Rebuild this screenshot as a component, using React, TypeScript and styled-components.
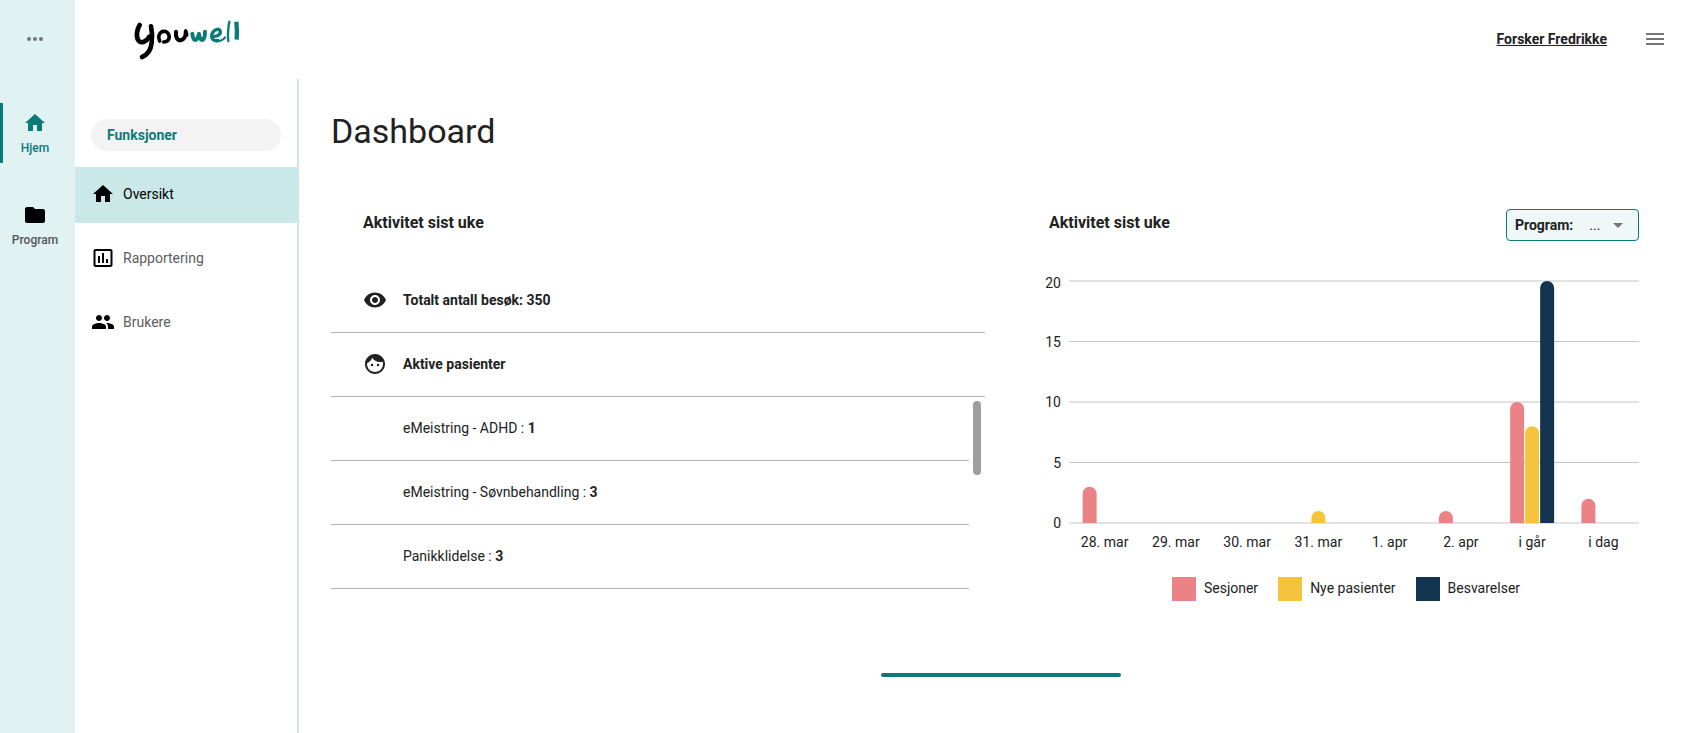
import React from "react";
import styled, { createGlobalStyle } from "styled-components";
import {
  MdArrowDropDown,
  MdFace,
  MdFolder,
  MdHome,
  MdInsertChartOutlined,
  MdMenu,
  MdMoreHoriz,
  MdPeople,
  MdVisibility,
} from "react-icons/md";

const teal = "#0b7b79";
const ink = "#212121";
const muted = "#5c5c5c";
const rule = "#b3b3b3";

const GlobalStyle = createGlobalStyle`
  *, *::before, *::after { box-sizing: border-box; }
  body {
    margin: 0;
    background: #fff;
    color: ${ink};
    font-family: Roboto, "Liberation Sans", sans-serif;
    font-size: 14px;
    line-height: 20px;
  }
  h1, h2, ul { margin: 0; padding: 0; }
  ul { list-style: none; }
  button { padding: 0; border: 0; background: none; cursor: pointer; font: inherit; }
  svg { display: block; flex-shrink: 0; }
`;

const Page = styled.div`
  display: flex;
  min-height: 100vh;
`;

const Rail = styled.nav`
  display: flex;
  flex-direction: column;
  gap: 32px;
  flex: 0 0 75px;
  background: #e0f2f1;
`;

const RailMore = styled.button`
  display: flex;
  align-items: center;
  justify-content: center;
  height: 71px;
  padding: 6px 5px 0 0;
  color: #757575;
`;

const RailLink = styled.a<{ $active?: boolean }>`
  display: flex;
  flex-direction: column;
  align-items: center;
  gap: 4px;
  height: 60px;
  padding: 8px 8px 0 0;
  border-left: 3px solid ${(p) => (p.$active ? teal : "transparent")};
  color: ${(p) => (p.$active ? teal : "#555")};
  font-size: 12px;
  line-height: 18px;
  font-weight: 500;
  text-decoration: none;

  svg {
    color: ${(p) => (p.$active ? teal : "#000")};
  }
`;

const Shell = styled.div`
  display: flex;
  flex-direction: column;
  flex: 1;
  min-width: 0;
`;

const TopBar = styled.header`
  display: flex;
  align-items: center;
  justify-content: space-between;
  height: 79px;
  padding: 0 24px 0 45px;
`;

const Account = styled.div`
  display: flex;
  align-items: center;
  gap: 36px;
  padding-bottom: 2px;
`;

const AccountLink = styled.a`
  color: ${ink};
  font-weight: 700;
  text-decoration: underline;
`;

const MenuButton = styled.button`
  color: #757575;
`;

const Body = styled.div`
  display: flex;
  flex: 1;
`;

const SideNav = styled.nav`
  flex: 0 0 224px;
  padding-top: 40px;
  border-right: 2px solid #c9e8e7;
`;

const SideTitle = styled.h2`
  margin: 0 16px 16px;
  padding: 6px 16px;
  border-radius: 16px;
  background: #f3f3f3;
  color: ${teal};
  font-size: 14px;
  line-height: 20px;
  font-weight: 700;
`;

const SideList = styled.ul`
  display: flex;
  flex-direction: column;
  gap: 8px;
`;

const SideLink = styled.a<{ $active?: boolean }>`
  display: flex;
  align-items: center;
  gap: 8px;
  height: 56px;
  padding: 0 16px 2px;
  background: ${(p) => (p.$active ? "#c9e8e7" : "transparent")};
  color: ${(p) => (p.$active ? "#000" : muted)};
  text-decoration: none;

  svg {
    color: #000;
  }
`;

const Main = styled.main`
  display: flex;
  flex-direction: column;
  flex: 1;
  min-width: 0;
  padding: 32px 20px 32px 32px;
`;

const Title = styled.h1`
  font-size: 34px;
  line-height: 40px;
  font-weight: 400;
`;

const Panels = styled.div`
  display: grid;
  grid-template-columns: 1fr 1fr;
  margin-top: 58px;
  padding-right: 32px;
`;

const Panel = styled.section`
  min-width: 0;
`;

const PanelHead = styled.div<{ $inset: number }>`
  display: flex;
  justify-content: space-between;
  height: 60px;
  padding-left: ${(p) => p.$inset}px;
`;

const PanelTitle = styled.h2`
  padding-top: 2px;
  font-size: 16px;
  line-height: 24px;
  font-weight: 700;
`;

const StatRow = styled.div`
  display: flex;
  align-items: center;
  gap: 16px;
  height: 64px;
  padding: 0 0 2px 32px;
  border-bottom: 1px solid ${rule};
  font-weight: 700;
`;

const Scroller = styled.div`
  display: flex;
`;

const ProgramList = styled.ul`
  flex: 1;
`;

const ProgramRow = styled.li`
  display: flex;
  align-items: center;
  height: 64px;
  padding: 0 0 2px 72px;
  border-bottom: 1px solid ${rule};
  white-space: pre;
`;

const Thumb = styled.div`
  width: 8px;
  height: 74px;
  margin: 4px;
  border-radius: 4px;
  background: #9e9e9e;
`;

const Picker = styled.div`
  display: flex;
  align-items: center;
  width: 133px;
  height: 32px;
  padding: 0 8px;
  border: 1px solid ${teal};
  border-radius: 4px;
  background: #eff7f7;
`;

const PickerLabel = styled.label`
  font-weight: 700;
`;

const PickerField = styled.div`
  display: grid;
  flex: 1;
  align-items: center;

  > * {
    grid-area: 1 / 1;
  }
  > svg {
    justify-self: end;
    color: #757575;
    pointer-events: none;
  }
`;

const PickerSelect = styled.select`
  appearance: none;
  width: 100%;
  padding: 0 24px 0 16px;
  border: 0;
  background: none;
  color: ${ink};
  font: inherit;
`;

const ChartArea = styled.div`
  padding-left: 52px;
`;

const ChartSvg = styled.svg`
  width: 100%;
  height: 292px;
  overflow: visible;

  text {
    fill: ${ink};
    font-size: 14px;
  }
`;

const Legend = styled.ul`
  display: flex;
  justify-content: center;
  gap: 20px;
  margin-top: 16px;
  padding-left: 16px;
`;

const LegendItem = styled.li<{ $color: string }>`
  display: flex;
  align-items: flex-start;
  gap: 8px;
  line-height: 22px;

  &::before {
    content: "";
    width: 24px;
    height: 24px;
    background: ${(p) => p.$color};
  }
`;

const BottomBar = styled.div`
  align-self: center;
  width: 240px;
  height: 4px;
  margin-top: 72px;
  border-radius: 2px;
  background: ${teal};
`;

const Logo = () => (
  <svg width="130" height="60" viewBox="0 0 390 180" fill="none" strokeLinecap="round" strokeLinejoin="round" role="img" aria-label="youwell">
    <g stroke="#000">
      <path d="M59 45C51 58 47 78 55 91C64 103 80 94 88 80" strokeWidth="14" />
      <path d="M93 49C96 62 97 80 95 98C93 116 84 134 66 141" strokeWidth="14" />
      <path d="M127 64C116 70 114 82 119 93M131 96C147 96 150 82 146 73C142 65 134 62 129 65" strokeWidth="11" />
      <path d="M168 65C166 80 172 92 182 91C192 89 198 79 197 65" strokeWidth="12" />
      <path d="M197 62C199 66 201 71 201 76" strokeWidth="9" />
    </g>
    <g stroke={teal}>
      <path d="M217 71C218 82 221 90 226 90C231 89 235 79 237 72C238 82 242 90 247 90C252 88 255 77 255 65" strokeWidth="12" />
      <path d="M280 79C292 80 302 74 301 64C299 52 281 59 276 72C272 87 282 94 294 92" strokeWidth="10" />
      <path d="M290 94C303 93 311 88 315 82" strokeWidth="6" />
      <path d="M328 35C324 56 323 78 325 93" strokeWidth="7" />
      <path d="M349 35C351 54 351 76 350 89" strokeWidth="13" strokeLinecap="butt" />
    </g>
  </svg>
);

const series = [
  { name: "Sesjoner", color: "#ea8286" },
  { name: "Nye pasienter", color: "#f5c43c" },
  { name: "Besvarelser", color: "#12344f" },
];

const days = [
  { label: "28. mar", values: [3, 0, 0] },
  { label: "29. mar", values: [0, 0, 0] },
  { label: "30. mar", values: [0, 0, 0] },
  { label: "31. mar", values: [0, 1, 0] },
  { label: "1. apr", values: [0, 0, 0] },
  { label: "2. apr", values: [1, 0, 0] },
  { label: "i går", values: [10, 8, 20] },
  { label: "i dag", values: [2, 0, 0] },
];

const programs = [
  { name: "eMeistring - ADHD", count: 1 },
  { name: "eMeistring - Søvnbehandling", count: 3 },
  { name: "Panikklidelse", count: 3 },
];

const plotTop = 12;
const plotHeight = 242;
const baseline = plotTop + plotHeight;
const yOf = (value: number) => baseline - (value / 20) * plotHeight;

const barPath = (x: number, value: number) => {
  const top = yOf(value);
  return `M${x} ${baseline}V${top + 7}a7 7 0 0 1 14 0V${baseline}Z`;
};

const Chart = () => (
  <ChartSvg role="img" aria-label="Aktivitet sist uke">
    {[20, 15, 10, 5, 0].map((tick) => (
      <text key={tick} x="24" y={yOf(tick) + (tick === 20 ? 7 : 5)} textAnchor="end">
        {tick}
      </text>
    ))}
    <svg x="32" y="0" style={{ width: "calc(100% - 32px)", overflow: "visible" }}>
      {[20, 15, 10, 5, 0].map((tick) => (
        <line key={tick} x1="0" x2="100%" y1={yOf(tick)} y2={yOf(tick)} stroke="#c4c4c4" />
      ))}
      {days.map((day, i) => (
        <svg key={day.label} x={`${((i + 0.5) / days.length) * 100}%`} overflow="visible">
          {day.values.map((value, s) =>
            value > 0 ? <path key={s} d={barPath(-22 + s * 15, value)} fill={series[s].color} /> : null
          )}
          <text y={baseline + 24} textAnchor="middle">
            {day.label}
          </text>
        </svg>
      ))}
    </svg>
  </ChartSvg>
);

export default function App() {
  return (
    <Page>
      <GlobalStyle />
      <Rail aria-label="Hovedmeny">
        <RailMore aria-label="Mer">
          <MdMoreHoriz size={24} />
        </RailMore>
        <RailLink href="#hjem" $active>
          <MdHome size={24} />
          Hjem
        </RailLink>
        <RailLink href="#program">
          <MdFolder size={24} />
          Program
        </RailLink>
      </Rail>
      <Shell>
        <TopBar>
          <Logo />
          <Account>
            <AccountLink href="#konto">Forsker Fredrikke</AccountLink>
            <MenuButton aria-label="Meny">
              <MdMenu size={24} />
            </MenuButton>
          </Account>
        </TopBar>
        <Body>
          <SideNav aria-label="Funksjoner">
            <SideTitle>Funksjoner</SideTitle>
            <SideList>
              <li>
                <SideLink href="#oversikt" $active>
                  <MdHome size={24} />
                  Oversikt
                </SideLink>
              </li>
              <li>
                <SideLink href="#rapportering">
                  <MdInsertChartOutlined size={24} />
                  Rapportering
                </SideLink>
              </li>
              <li>
                <SideLink href="#brukere">
                  <MdPeople size={24} />
                  Brukere
                </SideLink>
              </li>
            </SideList>
          </SideNav>
          <Main>
            <Title>Dashboard</Title>
            <Panels>
              <Panel>
                <PanelHead $inset={32}>
                  <PanelTitle>Aktivitet sist uke</PanelTitle>
                </PanelHead>
                <StatRow>
                  <MdVisibility size={24} />
                  Totalt antall besøk: 350
                </StatRow>
                <StatRow>
                  <MdFace size={24} />
                  Aktive pasienter
                </StatRow>
                <Scroller>
                  <ProgramList>
                    {programs.map((program) => (
                      <ProgramRow key={program.name}>
                        {program.name} : <strong>{program.count}</strong>
                      </ProgramRow>
                    ))}
                  </ProgramList>
                  <Thumb />
                </Scroller>
              </Panel>
              <Panel>
                <PanelHead $inset={64}>
                  <PanelTitle>Aktivitet sist uke</PanelTitle>
                  <Picker>
                    <PickerLabel htmlFor="program">Program:</PickerLabel>
                    <PickerField>
                      <PickerSelect id="program">
                        <option>...</option>
                      </PickerSelect>
                      <MdArrowDropDown size={24} />
                    </PickerField>
                  </Picker>
                </PanelHead>
                <ChartArea>
                  <Chart />
                  <Legend>
                    {series.map((s) => (
                      <LegendItem key={s.name} $color={s.color}>
                        {s.name}
                      </LegendItem>
                    ))}
                  </Legend>
                </ChartArea>
              </Panel>
            </Panels>
            <BottomBar />
          </Main>
        </Body>
      </Shell>
    </Page>
  );
}
